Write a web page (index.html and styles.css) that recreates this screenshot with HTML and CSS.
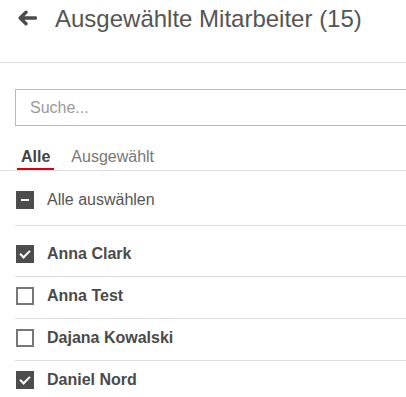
FILE: index.html
```html
<!DOCTYPE html>
<html lang="de">
<head>
    <meta charset="utf-8">
    <title>Ausgewählte Mitarbeiter</title>
    <link rel="stylesheet" href="styles.css">
</head>
<body>
    <div class="header">
        <a class="back" href="#">
            <svg width="20" height="16" viewBox="0 0 20 16">
                <path d="M18.5 8H3.5M9 2.2L3.2 8L9 13.8" fill="none" stroke="#4d4d4d" stroke-width="3.4" stroke-linecap="round" stroke-linejoin="round"/>
            </svg>
        </a>
        <h1 class="title">Ausgewählte Mitarbeiter (15)</h1>
    </div>

    <div class="search">
        <input type="text" placeholder="Suche...">
    </div>

    <div class="tabs">
        <span class="tab active">Alle</span>
        <span class="tab">Ausgewählt</span>
    </div>

    <div class="list">
        <div class="row select-all">
            <span class="box partial"></span>
            <span class="label">Alle auswählen</span>
        </div>

        <div class="items">
            <div class="row item">
                <span class="box checked"></span>
                <span class="name">Anna Clark</span>
            </div>
            <div class="row item">
                <span class="box"></span>
                <span class="name">Anna Test</span>
            </div>
            <div class="row item">
                <span class="box"></span>
                <span class="name">Dajana Kowalski</span>
            </div>
            <div class="row item">
                <span class="box checked"></span>
                <span class="name">Daniel Nord</span>
            </div>
        </div>
    </div>
</body>
</html>
```

FILE: styles.css
```css
body {
    margin: 0;
    overflow: hidden;
    font-family: 'Liberation Sans', Arial, sans-serif;
    font-size: 16px;
    color: #555;
    background: #fff;
}

/* header */

.header {
    display: flex;
    align-items: flex-start;
    height: 57px;
    padding-top: 5px;
    border-bottom: 1px solid #ddd;
}

.back {
    display: block;
    margin: 5px 0 0 17px;
    line-height: 0;
}

.title {
    margin: 0 0 0 18px;
    font-size: 24px;
    font-weight: normal;
    line-height: 28px;
    color: #555;
}

/* search - the field runs on past the right edge, so no right border */

.search {
    padding: 26px 0 0 15px;
}

.search input {
    box-sizing: border-box;
    display: block;
    width: 100%;
    height: 37px;
    margin: 0;
    padding: 0 14px;
    border: 1px solid #bbb;
    border-right: none;
    border-radius: 0;
    font-family: inherit;
    font-size: 16px;
    color: #555;
    outline: none;
}

.search input::placeholder {
    color: #999;
}

/* tabs */

.tabs {
    display: flex;
    gap: 13px;
    margin-top: 21px;
    padding-left: 17px;
    border-bottom: 1px solid #ddd;
}

.tab {
    padding: 0 4px 1px 4px;
    line-height: 20px;
    border-bottom: 2px solid transparent;
    color: #777;
}

.tab.active {
    font-weight: bold;
    color: #444;
    border-bottom-color: #d0021b;
}

/* list */

.list {
    margin-left: 15px;
}

.row {
    display: flex;
    align-items: center;
    gap: 13px;
    padding-left: 1px;
    border-bottom: 1px solid #ddd;
}

.select-all {
    padding-top: 20px;
    padding-bottom: 16px;
    margin-bottom: 9px;
}

.item {
    padding-top: 10px;
    padding-bottom: 13px;
}

.label {
    color: #555;
}

.name {
    font-weight: bold;
    color: #4a4a4a;
}

.box {
    box-sizing: border-box;
    position: relative;
    flex: none;
    width: 18px;
    height: 18px;
    border: 2px solid #777;
    background: #fff;
}

.box.checked,
.box.partial {
    border-color: #4d4d4d;
    background: #4d4d4d;
}

.box.partial::after {
    content: "";
    position: absolute;
    left: 3px;
    top: 6px;
    width: 8px;
    height: 2px;
    background: #fff;
}

.box.checked::after {
    content: "";
    position: absolute;
    left: 4px;
    top: 1px;
    width: 4px;
    height: 8px;
    border: solid #fff;
    border-width: 0 2px 2px 0;
    transform: rotate(45deg);
}
```
